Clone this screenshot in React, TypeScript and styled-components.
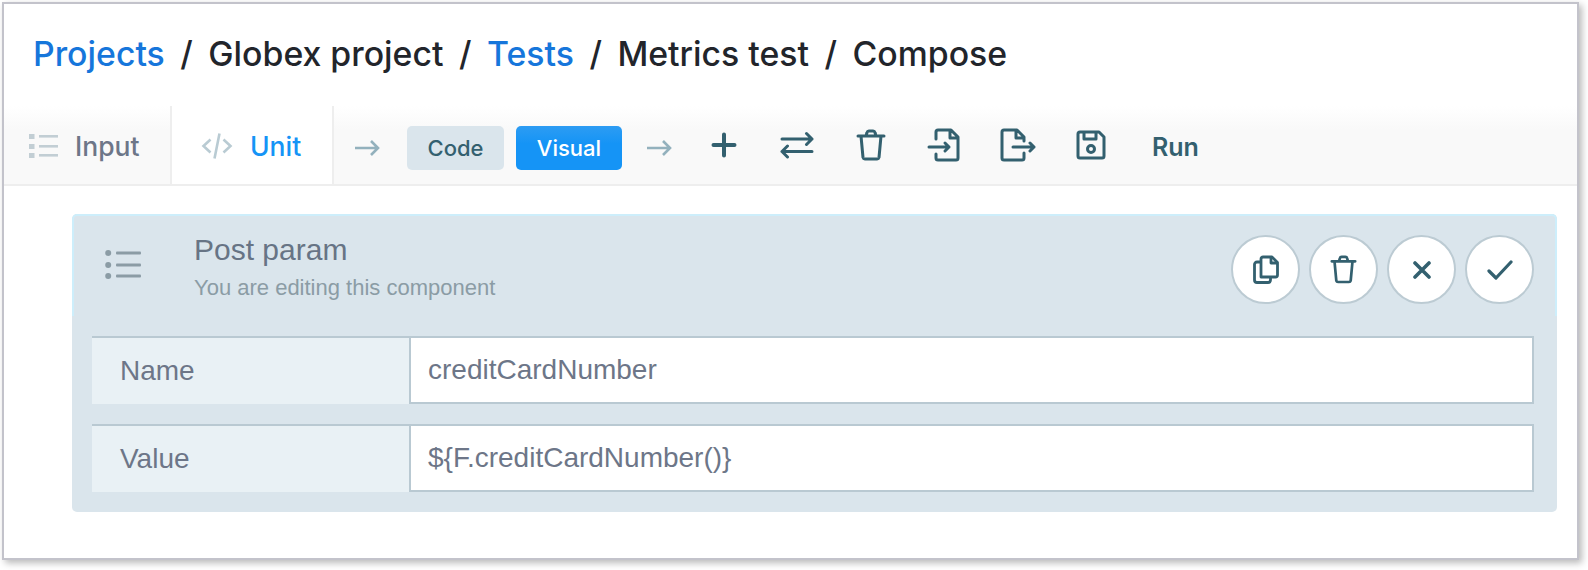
import styled, { createGlobalStyle } from "styled-components";

const GlobalStyle = createGlobalStyle`
  html, body {
    margin: 0;
    padding: 0;
    background: #fff;
  }
  body {
    width: 1588px;
    height: 570px;
    overflow: hidden;
    font-family: "Inter", "Liberation Sans", sans-serif;
  }
`;

const INK = "#33606f";

function SquareListIcon() {
  return (
    <svg width="30" height="26" viewBox="0 0 30 26" fill="#c2ced4">
      {[1, 11, 20].map((y) => (
        <rect key={y} x="0" y={y} width="5.500" height="5" />
      ))}
      {[2, 12, 21].map((y) => (
        <rect key={y} x="10" y={y} width="19" height="2.600" />
      ))}
    </svg>
  );
}

function DotListIcon() {
  return (
    <svg width="36" height="30" viewBox="0 0 36 30" fill="#8b9ca5">
      {[3, 15, 26].map((y) => (
        <circle key={y} cx="3.200" cy={y} r="3" />
      ))}
      {[3, 15, 26].map((y) => (
        <rect key={y} x="11" y={y - 1.5} width="25" height="3" rx="1" />
      ))}
    </svg>
  );
}

function CodeIcon() {
  return (
    <svg width="32" height="28" viewBox="0 0 32 28" fill="none" stroke="#b9cbd3" strokeWidth="2.6">
      <path d="M9.500 7.500 2.500 14l7 6.500M22.500 7.500l7 6.500-7 6.500M18.500 1.500l-5 25" />
    </svg>
  );
}

function ArrowIcon() {
  return (
    <svg width="26" height="18" viewBox="0 0 26 18" fill="none" stroke="#93b1bd" strokeWidth="2.6">
      <path d="M0 9h23M16 2l7 7-7 7" />
    </svg>
  );
}

function PlusIcon() {
  return (
    <svg width="26" height="26" viewBox="0 0 26 26" fill="none" stroke={INK} strokeWidth="4" strokeLinecap="round">
      <path d="M13 2.500v21M2.500 13h21" />
    </svg>
  );
}

function SwapIcon() {
  return (
    <svg width="34" height="28" viewBox="0 0 34 28" fill="none" stroke={INK} strokeWidth="3" strokeLinecap="round" strokeLinejoin="round">
      <path d="M2 8h30M26.500 2.500 32 8l-5.500 5.500M32 20.500H2M7.500 15 2 20.500 7.500 26" />
    </svg>
  );
}

function TrashIcon({ size = 30 }: { size?: number }) {
  return (
    <svg width={size} height={(size * 32) / 30} viewBox="0 0 30 32" fill="none" stroke={INK} strokeWidth="3" strokeLinecap="round" strokeLinejoin="round">
      <path d="M2 7h26M10 7l1-3.500a2 2 0 0 1 2-1.500h4a2 2 0 0 1 2 1.500L20 7M5 7l2 21.500A2 2 0 0 0 9 30h12a2 2 0 0 0 2-1.500L25 7" />
    </svg>
  );
}

function ImportIcon() {
  return (
    <svg width="34" height="34" viewBox="0 0 34 34" fill="none" stroke={INK} strokeWidth="3" strokeLinecap="round" strokeLinejoin="round">
      <path d="M9 11V4a2 2 0 0 1 2-2h13l7 7v21a2 2 0 0 1-2 2H11a2 2 0 0 1-2-2v-4M23 2v8h8M2 19h20M18 15l4 4-4 4" />
    </svg>
  );
}

function ExportIcon() {
  return (
    <svg width="38" height="34" viewBox="0 0 38 34" fill="none" stroke={INK} strokeWidth="3" strokeLinecap="round" strokeLinejoin="round">
      <path d="M25 13V9l-7-7H5a2 2 0 0 0-2 2v26a2 2 0 0 0 2 2h18a2 2 0 0 0 2-2v-5M17 2v8h8M14 19h21M31 15l4 4-4 4" />
    </svg>
  );
}

function SaveIcon() {
  return (
    <svg width="30" height="30" viewBox="0 0 30 30" fill="none" stroke={INK} strokeWidth="3" strokeLinejoin="round">
      <path d="M4 2h19l5 5v19a2 2 0 0 1-2 2H4a2 2 0 0 1-2-2V4a2 2 0 0 1 2-2Z" />
      <path d="M8 2v7h12V2" />
      <circle cx="15" cy="19" r="3.500" />
    </svg>
  );
}

function CopyIcon() {
  return (
    <svg width="26" height="30" viewBox="0 0 26 30" fill="none" stroke={INK} strokeWidth="2.800" strokeLinejoin="round">
      <path d="M8 22V4a2 2 0 0 1 2-2h9l5.500 5.500V20a2 2 0 0 1-2 2H8Z" />
      <path d="M18 2v6h6.500" />
      <path d="M8 7H4a2.500 2.500 0 0 0-2.500 2.500V25A2.500 2.500 0 0 0 4 27.500h11a2.500 2.500 0 0 0 2.500-2.500v-3" />
    </svg>
  );
}

function CloseIcon() {
  return (
    <svg width="18" height="18" viewBox="0 0 18 18" fill="none" stroke={INK} strokeWidth="3.600" strokeLinecap="round">
      <path d="M2 2l14 14M16 2 2 16" />
    </svg>
  );
}

function CheckIcon() {
  return (
    <svg width="26" height="20" viewBox="0 0 26 20" fill="none" stroke={INK} strokeWidth="3.200" strokeLinecap="round" strokeLinejoin="round">
      <path d="M2 11l7 7L24 2" />
    </svg>
  );
}

export default function App() {
  return (
    <>
      <GlobalStyle />
      <Page>
        <Frame>
          <Breadcrumb>
            <CrumbLink>Projects</CrumbLink>
            <Slash>/</Slash>
            <Crumb>Globex project</Crumb>
            <Slash>/</Slash>
            <CrumbLink>Tests</CrumbLink>
            <Slash>/</Slash>
            <Crumb>Metrics test</Crumb>
            <Slash>/</Slash>
            <Crumb>Compose</Crumb>
          </Breadcrumb>
          <Toolbar>
            <InputTab>
              <SquareListIcon />
              Input
            </InputTab>
            <UnitTab>
              <CodeIcon />
              Unit
            </UnitTab>
            <Actions>
              <ArrowIcon />
              <Switcher>
                <SwitchButton>Code</SwitchButton>
                <SwitchButton $active>Visual</SwitchButton>
              </Switcher>
              <ArrowIcon />
              <Tools>
                <ToolIcon><PlusIcon /></ToolIcon>
                <ToolIcon><SwapIcon /></ToolIcon>
                <ToolIcon><TrashIcon /></ToolIcon>
                <ToolIcon><ImportIcon /></ToolIcon>
                <ToolIcon><ExportIcon /></ToolIcon>
                <ToolIcon><SaveIcon /></ToolIcon>
              </Tools>
              <RunLabel>Run</RunLabel>
            </Actions>
          </Toolbar>
          <Panel>
            <PanelHeader>
              <HeaderIcon><DotListIcon /></HeaderIcon>
              <HeaderText>
                <Title>Post param</Title>
                <Subtitle>You are editing this component</Subtitle>
              </HeaderText>
              <RoundButtons>
                <RoundButton><CopyIcon /></RoundButton>
                <RoundButton><TrashIcon size={27} /></RoundButton>
                <RoundButton><CloseIcon /></RoundButton>
                <RoundButton><CheckIcon /></RoundButton>
              </RoundButtons>
            </PanelHeader>
            <Fields>
              <Field>
                <FieldLabel>Name</FieldLabel>
                <FieldValue>creditCardNumber</FieldValue>
              </Field>
              <Field>
                <FieldLabel>Value</FieldLabel>
                <FieldValue>{"${F.creditCardNumber()}"}</FieldValue>
              </Field>
            </Fields>
          </Panel>
        </Frame>
      </Page>
    </>
  );
}

const Page = styled.div`
  padding: 2px 9px 10px 2px;
  height: 570px;
  box-sizing: border-box;
`;

const Frame = styled.div`
  box-sizing: border-box;
  height: 558px;
  border: 2px solid #c3c3cb;
  background: #fff;
  box-shadow: 3px 3px 7px rgba(0, 0, 0, 0.28);
  display: flex;
  flex-direction: column;
`;

const Breadcrumb = styled.div`
  height: 102px;
  box-sizing: border-box;
  padding: 28px 0 0 29px;
  display: flex;
  align-items: flex-start;
  font-size: 33.8px;
  line-height: 44px;
  font-weight: 500;
`;

const Crumb = styled.span`
  color: #22252b;
`;

const CrumbLink = styled.span`
  color: #1676db;
`;

const Slash = styled.span`
  color: #22252b;
  margin: 0 15.5px;
`;

const Toolbar = styled.div`
  height: 80px;
  box-sizing: border-box;
  display: flex;
  border-bottom: 2px solid #eeeeee;
  background: linear-gradient(#ffffff, #f9f9f9 30%);
`;

const InputTab = styled.div`
  width: 168px;
  box-sizing: border-box;
  display: flex;
  align-items: center;
  gap: 16px;
  padding: 2px 0 0 25px;
  font-size: 26.5px;
  font-weight: 500;
  color: #6d7688;
  border-right: 2px solid #eeeeee;
`;

const UnitTab = styled(InputTab)`
  width: 162px;
  background: #fff;
  gap: 17px;
  padding-left: 29px;
  color: #1594f6;
`;

const Actions = styled.div`
  display: flex;
  align-items: center;
  padding: 6px 0 0 21px;
`;

const Switcher = styled.div`
  display: flex;
  gap: 12px;
  margin: 0 25px 0 26px;
`;

const SwitchButton = styled.div<{ $active?: boolean }>`
  height: 44px;
  display: flex;
  align-items: center;
  justify-content: center;
  width: ${(p) => (p.$active ? "106px" : "97px")};
  border-radius: 5px;
  font-size: 22px;
  font-weight: 500;
  color: ${(p) => (p.$active ? "#fff" : INK)};
  background: ${(p) => (p.$active ? "linear-gradient(#2d9cf3, #1594f6 40%)" : "#dae5ec")};
`;

const Tools = styled.div`
  display: flex;
  align-items: center;
  margin: 0 0 6px 14px;
`;

const ToolIcon = styled.div`
  width: 73.5px;
  display: flex;
  align-items: center;
  justify-content: center;
`;

const RunLabel = styled.div`
  font-size: 25px;
  font-weight: 600;
  color: ${INK};
  margin: 0 0 2px 24px;
`;

const Panel = styled.div`
  margin: 28px 20px 0 68px;
  height: 298px;
  background: #dae5ec;
  border-radius: 5px;
`;

const PanelHeader = styled.div`
  height: 102px;
  box-sizing: border-box;
  display: flex;
  align-items: flex-start;
  border: 2px solid #cdeefb;
  border-bottom: none;
  border-radius: 5px 5px 0 0;
`;

const HeaderIcon = styled.div`
  width: 120px;
  padding: 34px 0 0 31px;
  box-sizing: border-box;
`;

const HeaderText = styled.div`
  flex: 1;
  font-family: "Liberation Sans", Arial, sans-serif;
`;

const Title = styled.div`
  font-size: 30px;
  line-height: 32px;
  margin-top: 18px;
  color: #677485;
`;

const Subtitle = styled.div`
  font-size: 22px;
  line-height: 26px;
  margin-top: 9px;
  color: #8b9ca5;
`;

const RoundButtons = styled.div`
  display: flex;
  gap: 9px;
  padding: 19px 21px 0 0;
`;

const RoundButton = styled.div`
  width: 69px;
  height: 69px;
  box-sizing: border-box;
  border-radius: 50%;
  background: #fff;
  border: 2px solid #bccbd3;
  display: flex;
  align-items: center;
  justify-content: center;
`;

const Fields = styled.div`
  display: flex;
  flex-direction: column;
  gap: 20px;
  padding: 20px 23px 20px 20px;
  font-family: "Liberation Sans", Arial, sans-serif;
  font-size: 28px;
  color: #6d7688;
`;

const Field = styled.div`
  height: 68px;
  display: flex;
  box-sizing: border-box;
`;

const FieldLabel = styled.div`
  width: 317px;
  box-sizing: border-box;
  padding-left: 28px;
  display: flex;
  align-items: center;
  background: #e9f1f5;
  border-top: 2px solid #b9c9d2;
`;

const FieldValue = styled.div`
  flex: 1;
  box-sizing: border-box;
  padding-left: 17px;
  display: flex;
  align-items: center;
  background: #fff;
  border: 2px solid #b9c9d2;
`;
